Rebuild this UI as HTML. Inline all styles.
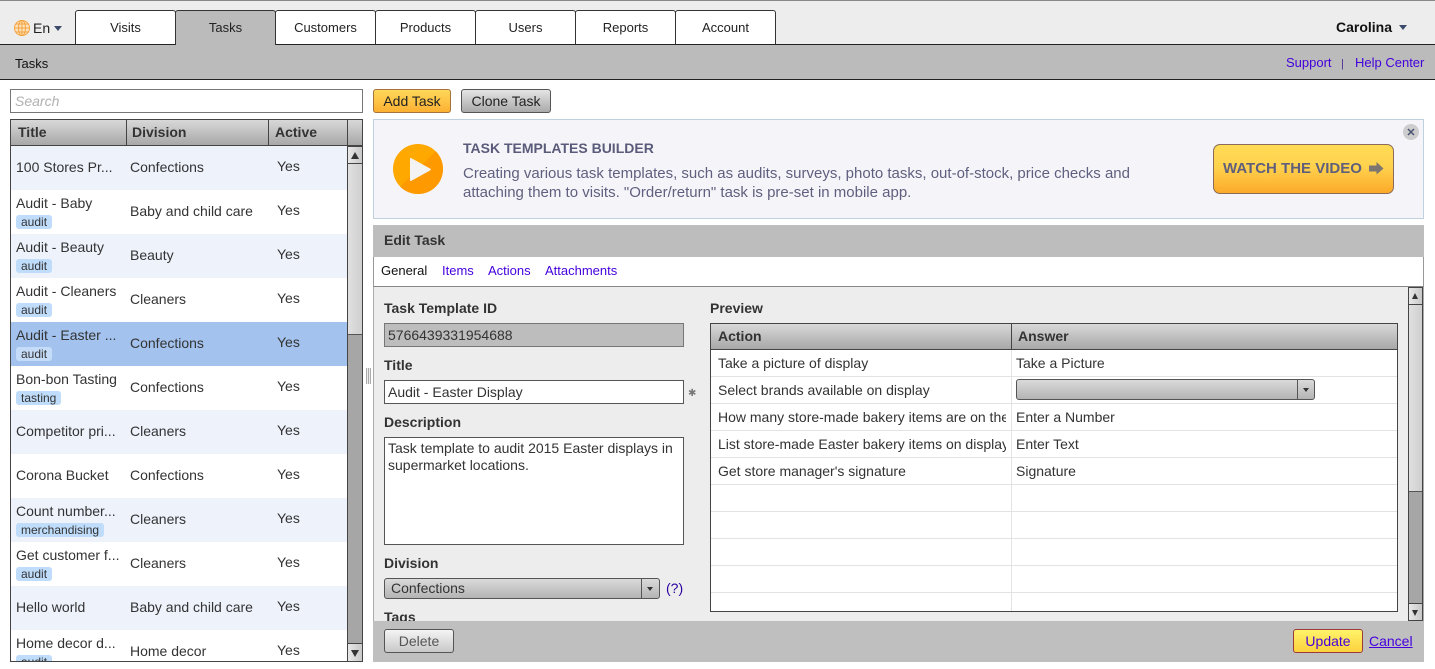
<!DOCTYPE html>
<html><head><meta charset="utf-8">
<style>
*{box-sizing:border-box;margin:0;padding:0}
html,body{width:1435px;height:669px;overflow:hidden;background:#fff;font-family:"Liberation Sans",sans-serif;font-size:14px;color:#333}
.a{position:absolute}
.t{position:absolute;white-space:nowrap;line-height:16px}
.tab{position:absolute;top:10px;width:101px;height:34px;background:#fff;border:1px solid #333;border-bottom:0;border-radius:3px 3px 0 0;text-align:center;font-size:13px;line-height:33px;color:#222}
.l{color:#4400dd}
.b{font-weight:bold}
.hd{background:linear-gradient(#d8d8d8,#a8a8a8);}
.row{position:absolute;left:1px;width:336px;height:44px}
.row .t{color:#333}
.tag{position:absolute;left:5px;top:25px;height:14px;background:#bfdcfb;border-radius:3px;font-size:12px;line-height:14px;padding:0 5px;color:#333}
.btn{position:absolute;border:1px solid #555;border-radius:3px;text-align:center;line-height:22px;background:linear-gradient(#e6e6e6,#b0b0b0);color:#333}
.sbb{position:absolute;background:linear-gradient(90deg,#e8e8e8,#c8c8c8);border:1px solid #444;text-align:center}
.hl{position:absolute;left:1px;width:686px;height:1px;background:#e3e3e3}
</style></head><body>

<!-- top bar -->
<div class="a" style="left:0;top:0;width:1435px;height:44px;background:#ededed;border-top:1px solid #888"></div>
<div class="a" style="left:0;top:44px;width:1435px;height:36px;background:#bbb;border-top:1px solid #222;border-bottom:1px solid #222"></div>
<svg class="a" style="left:13px;top:19px" width="18" height="18" viewBox="0 0 18 18" fill="none" stroke="#f5a33c" stroke-width="1"><circle cx="9" cy="9" r="7.5" fill="#fbe3c0"/><ellipse cx="9" cy="9" rx="3.5" ry="7.5"/><path d="M1.5 9h15M2.600 5h12.800M2.600 13h12.800M9 1.500v15"/></svg>
<div class="t" style="left:33px;top:20px;font-size:14px;color:#222">En</div>
<div class="a" style="left:54px;top:26px;border:4px solid transparent;border-top:5px solid #3b4a6b;border-left-width:4.5px;border-right-width:4.5px;border-bottom:0"></div>
<div class="tab" style="left:75px">Visits</div>
<div class="tab" style="left:175px;background:#bbb;height:35px;z-index:2;width:101px">Tasks</div>
<div class="tab" style="left:275px">Customers</div>
<div class="tab" style="left:375px">Products</div>
<div class="tab" style="left:475px">Users</div>
<div class="tab" style="left:575px">Reports</div>
<div class="tab" style="left:675px">Account</div>
<div class="t b" style="left:1336px;top:19px;color:#111">Carolina</div>
<div class="a" style="left:1399px;top:25px;border:4px solid transparent;border-top:5px solid #3b4a6b;border-left-width:4.5px;border-right-width:4.5px;border-bottom:0"></div>
<div class="t" style="left:15px;top:56px;font-size:13px;color:#111">Tasks</div>
<div class="t l" style="left:1286px;top:55px;font-size:13px">Support</div>
<div class="t" style="left:1341px;top:56px;font-size:11px;color:#4a2a90">|</div>
<div class="t l" style="left:1355px;top:55px;font-size:13px">Help Center</div>

<!-- search -->
<div class="a" style="left:10px;top:89px;width:353px;height:24px;border:1px solid #777;background:#fff"></div>
<div class="t" style="left:15px;top:93px;font-style:italic;color:#b0b0b0">Search</div>

<!-- left table -->
<div class="a" style="left:10px;top:119px;width:353px;height:543px;border:1px solid #444;overflow:hidden;background:#fff">
  <div class="a hd" style="left:0;top:0;width:351px;height:26px;border-bottom:1px solid #444"></div>
  <div class="a" style="left:115px;top:0;width:1px;height:25px;background:#444"></div>
  <div class="a" style="left:257px;top:0;width:1px;height:25px;background:#444"></div>
  <div class="a" style="left:336px;top:0;width:1px;height:25px;background:#444"></div>
  <div class="t b" style="left:7px;top:4px;color:#333">Title</div>
  <div class="t b" style="left:121px;top:4px;color:#333">Division</div>
  <div class="t b" style="left:264px;top:4px;color:#333">Active</div>

  <div class="row" style="left:0;top:26px;background:#eef2fb"><div class="t" style="left:5px;top:13px">100 Stores Pr...</div><div class="t" style="left:119px;top:13px">Confections</div><div class="t" style="left:266px;top:12px">Yes</div></div>
  <div class="row" style="left:0;top:70px"><div class="t" style="left:5px;top:5px">Audit - Baby</div><div class="tag">audit</div><div class="t" style="left:119px;top:13px">Baby and child care</div><div class="t" style="left:266px;top:12px">Yes</div></div>
  <div class="row" style="left:0;top:114px;background:#eef2fb"><div class="t" style="left:5px;top:5px">Audit - Beauty</div><div class="tag">audit</div><div class="t" style="left:119px;top:13px">Beauty</div><div class="t" style="left:266px;top:12px">Yes</div></div>
  <div class="row" style="left:0;top:158px"><div class="t" style="left:5px;top:5px">Audit - Cleaners</div><div class="tag">audit</div><div class="t" style="left:119px;top:13px">Cleaners</div><div class="t" style="left:266px;top:12px">Yes</div></div>
  <div class="row" style="left:0;top:202px;background:#a3c3ee"><div class="t" style="left:5px;top:5px">Audit - Easter ...</div><div class="tag" style="background:#c4dcf8">audit</div><div class="t" style="left:119px;top:13px">Confections</div><div class="t" style="left:266px;top:12px">Yes</div></div>
  <div class="row" style="left:0;top:246px"><div class="t" style="left:5px;top:5px">Bon-bon Tasting</div><div class="tag">tasting</div><div class="t" style="left:119px;top:13px">Confections</div><div class="t" style="left:266px;top:12px">Yes</div></div>
  <div class="row" style="left:0;top:290px;background:#eef2fb"><div class="t" style="left:5px;top:13px">Competitor pri...</div><div class="t" style="left:119px;top:13px">Cleaners</div><div class="t" style="left:266px;top:12px">Yes</div></div>
  <div class="row" style="left:0;top:334px"><div class="t" style="left:5px;top:13px">Corona Bucket</div><div class="t" style="left:119px;top:13px">Confections</div><div class="t" style="left:266px;top:12px">Yes</div></div>
  <div class="row" style="left:0;top:378px;background:#eef2fb"><div class="t" style="left:5px;top:5px">Count number...</div><div class="tag">merchandising</div><div class="t" style="left:119px;top:13px">Cleaners</div><div class="t" style="left:266px;top:12px">Yes</div></div>
  <div class="row" style="left:0;top:422px"><div class="t" style="left:5px;top:5px">Get customer f...</div><div class="tag">audit</div><div class="t" style="left:119px;top:13px">Cleaners</div><div class="t" style="left:266px;top:12px">Yes</div></div>
  <div class="row" style="left:0;top:466px;background:#eef2fb"><div class="t" style="left:5px;top:13px">Hello world</div><div class="t" style="left:119px;top:13px">Baby and child care</div><div class="t" style="left:266px;top:12px">Yes</div></div>
  <div class="row" style="left:0;top:510px"><div class="t" style="left:5px;top:5px">Home decor d...</div><div class="tag">audit</div><div class="t" style="left:119px;top:13px">Home decor</div><div class="t" style="left:266px;top:12px">Yes</div></div>

  <!-- scrollbar -->
  <div class="a" style="left:336px;top:26px;width:15px;height:515px;background:#a6a6a6;border-left:1px solid #444"></div>
  <div class="a" style="left:337px;top:26px;width:14px;height:189px;background:linear-gradient(90deg,#e0e0e0,#cfcfcf);border-bottom:1px solid #555"></div>
  <div class="sbb" style="left:336px;top:26px;width:15px;height:18px;border-width:1px 0 1px 1px"></div>
  <div class="a" style="left:340px;top:32px;border:4px solid transparent;border-top:0;border-bottom:7px solid #333"></div>
  <div class="sbb" style="left:336px;top:523px;width:15px;height:18px;border-width:1px 0 0 1px"></div>
  <div class="a" style="left:340px;top:530px;border:4px solid transparent;border-bottom:0;border-top:7px solid #333"></div>
</div>

<!-- splitter -->
<div class="a" style="left:366px;top:368px;width:5px;height:16px;background:repeating-linear-gradient(90deg,#aaa 0,#aaa 1px,#eee 1px,#eee 2px)"></div>

<!-- buttons -->
<div class="btn" style="left:373px;top:89px;width:78px;height:24px;background:linear-gradient(#ffd95a,#fdb032);border-color:#a5713c;color:#222">Add Task</div>
<div class="btn" style="left:461px;top:89px;width:90px;height:24px;background:linear-gradient(#e4e4e4,#aaa);color:#222">Clone Task</div>

<!-- banner -->
<div class="a" style="left:373px;top:119px;width:1051px;height:100px;background:#f5f5f9;border:1px solid #c0d0de"></div>
<svg class="a" style="left:393px;top:144px" width="50" height="50" viewBox="0 0 50 50"><circle cx="25" cy="25" r="25" fill="#ffa800"/><path d="M42.700 7.300A25 25 0 0 1 7.300 42.700Z" fill="#ff9900"/><path d="M17 15Q17 13.500 18.500 14.300L37 24.500Q38.500 25.500 37 26.500L18.500 36.700Q17 37.500 17 36Z" fill="#f3f3f3"/></svg>
<div class="t b" style="left:463px;top:140px;color:#5a5a7a">TASK TEMPLATES BUILDER</div>
<div class="t" style="left:463px;top:164px;color:#5f5f7f;font-size:15px;line-height:19px;white-space:normal;width:720px">Creating various task templates, such as audits, surveys, photo tasks, out-of-stock, price checks and<br>attaching them to visits. "Order/return" task is pre-set in mobile app.</div>
<div class="a" style="left:1213px;top:144px;width:181px;height:50px;border:1px solid #8a6a5a;border-radius:7px;background:linear-gradient(#ffdb55 0,#ffd24e 45%,#fcaa28 100%)"></div>
<div class="t b" style="left:1223px;top:160px;font-size:15px;line-height:18px;color:#5f5f7c">WATCH THE VIDEO</div>
<svg class="a" style="left:1369px;top:161px" width="15" height="15" viewBox="0 0 15 15"><path d="M0 4.500h7.500V1L14.500 7.500 7.500 13.500V10.500H0Z" fill="#7d7570"/></svg>
<div class="a" style="left:1403px;top:124px;width:16px;height:16px;border-radius:50%;background:#cdcdcd"></div>
<svg class="a" style="left:1407px;top:128px" width="8" height="8" viewBox="0 0 8 8"><path d="M1 1L7 7M7 1L1 7" stroke="#4a5470" stroke-width="1.500"/></svg>

<!-- edit panel -->
<div class="a" style="left:373px;top:225px;width:1051px;height:437px;background:#ededed"></div>
<div class="a" style="left:373px;top:225px;width:1051px;height:32px;background:#bdbdbd"></div>
<div class="t b" style="left:384px;top:232px;color:#333">Edit Task</div>
<div class="a" style="left:373px;top:257px;width:1051px;height:30px;background:#fff;border-left:1px solid #999;border-right:1px solid #999;border-bottom:1px solid #888"></div>
<div class="t" style="left:381px;top:263px;font-size:13px;color:#111">General</div>
<div class="t l" style="left:442px;top:263px;font-size:13px">Items</div>
<div class="t l" style="left:488px;top:263px;font-size:13px">Actions</div>
<div class="t l" style="left:545px;top:263px;font-size:13px">Attachments</div>
<div class="a" style="left:373px;top:287px;width:1px;height:334px;background:#aaa"></div>
<div class="a" style="left:1423px;top:287px;width:1px;height:334px;background:#aaa"></div>

<div class="t b" style="left:384px;top:300px">Task Template ID</div>
<div class="a" style="left:384px;top:323px;width:300px;height:24px;background:#bdbdbd;border:1px solid #777"></div>
<div class="t" style="left:388px;top:327px;color:#333">5766439331954688</div>
<div class="t b" style="left:384px;top:357px">Title</div>
<div class="a" style="left:384px;top:380px;width:300px;height:24px;background:#fff;border:1px solid #555"></div>
<div class="t" style="left:388px;top:384px">Audit - Easter Display</div>
<div class="t" style="left:688px;top:386px;font-size:10px;color:#777">✱</div>
<div class="t b" style="left:384px;top:414px">Description</div>
<div class="a" style="left:384px;top:437px;width:300px;height:108px;background:#fff;border:1px solid #555"></div>
<div class="t" style="left:388px;top:440px;width:292px;white-space:normal;line-height:17px">Task template to audit 2015 Easter displays in<br>supermarket locations.</div>
<div class="t b" style="left:384px;top:555px">Division</div>
<div class="a" style="left:384px;top:578px;width:276px;height:21px;border:1px solid #555;border-radius:3px;background:linear-gradient(#dadada,#b4b4b4)"></div>
<div class="a" style="left:641px;top:578px;width:1px;height:21px;background:#555"></div>
<div class="a" style="left:647px;top:587px;border:3.500px solid transparent;border-bottom:0;border-top:4px solid #333"></div>
<div class="t" style="left:391px;top:580px;color:#333">Confections</div>
<div class="t l" style="left:666px;top:580px;color:#2a00a0">(?)</div>
<div class="t b" style="left:384px;top:609px">Tags</div>

<div class="t b" style="left:710px;top:300px">Preview</div>
<div class="a" style="left:710px;top:323px;width:688px;height:289px;background:#fff;border:1px solid #444;overflow:hidden">
  <div class="a hd" style="left:0;top:0;width:686px;height:26px;border-bottom:1px solid #444"></div>
  <div class="a" style="left:300px;top:0;width:1px;height:25px;background:#444"></div>
  <div class="a" style="left:300px;top:26px;width:1px;height:261px;background:#e3e3e3"></div>
  <div class="t b" style="left:7px;top:4px">Action</div>
  <div class="t b" style="left:307px;top:4px">Answer</div>
  <div class="hl" style="left:0;top:52px"></div><div class="hl" style="left:0;top:79px"></div><div class="hl" style="left:0;top:106px"></div><div class="hl" style="left:0;top:133px"></div><div class="hl" style="left:0;top:160px"></div><div class="hl" style="left:0;top:187px"></div><div class="hl" style="left:0;top:214px"></div><div class="hl" style="left:0;top:241px"></div><div class="hl" style="left:0;top:268px"></div>
  <div class="a" style="left:7px;top:26px;width:288px;height:160px;overflow:hidden">
    <div class="t" style="left:0;top:5px">Take a picture of display</div>
    <div class="t" style="left:0;top:32px">Select brands available on display</div>
    <div class="t" style="left:0;top:59px">How many store-made bakery items are on the display?</div>
    <div class="t" style="left:0;top:86px">List store-made Easter bakery items on display</div>
    <div class="t" style="left:0;top:113px">Get store manager's signature</div>
  </div>
  <div class="t" style="left:305px;top:31px">Take a Picture</div>
  <div class="a" style="left:305px;top:55px;width:299px;height:21px;border:1px solid #555;border-radius:3px;background:linear-gradient(#dadada,#b4b4b4)"></div>
  <div class="a" style="left:586px;top:55px;width:1px;height:21px;background:#555"></div>
  <div class="a" style="left:592px;top:64px;border:3.500px solid transparent;border-bottom:0;border-top:4px solid #333"></div>
  <div class="t" style="left:305px;top:85px">Enter a Number</div>
  <div class="t" style="left:305px;top:112px">Enter Text</div>
  <div class="t" style="left:305px;top:139px">Signature</div>
</div>

<!-- right scrollbar -->
<div class="a" style="left:1408px;top:287px;width:15px;height:334px;background:#a6a6a6;border:1px solid #444"></div>
<div class="a" style="left:1409px;top:305px;width:13px;height:187px;background:linear-gradient(90deg,#e0e0e0,#cfcfcf);border-bottom:1px solid #555"></div>
<div class="sbb" style="left:1408px;top:287px;width:15px;height:18px"></div>
<div class="a" style="left:1412px;top:293px;border:3.500px solid transparent;border-top:0;border-bottom:6px solid #333"></div>
<div class="sbb" style="left:1408px;top:603px;width:15px;height:18px"></div>
<div class="a" style="left:1412px;top:610px;border:3.500px solid transparent;border-bottom:0;border-top:6px solid #333"></div>

<!-- footer -->
<div class="a" style="left:373px;top:621px;width:1051px;height:41px;background:#bfbfbf"></div>
<div class="btn" style="left:384px;top:629px;width:70px;height:24px;background:linear-gradient(#f4f4f4,#c8c8c8);color:#555">Delete</div>
<div class="btn" style="left:1293px;top:629px;width:70px;height:24px;background:linear-gradient(#fff36a,#fbd13d);border-color:#9c3b3b;color:#4400dd">Update</div>
<div class="t l" style="left:1369px;top:633px;text-decoration:underline">Cancel</div>

</body></html>
